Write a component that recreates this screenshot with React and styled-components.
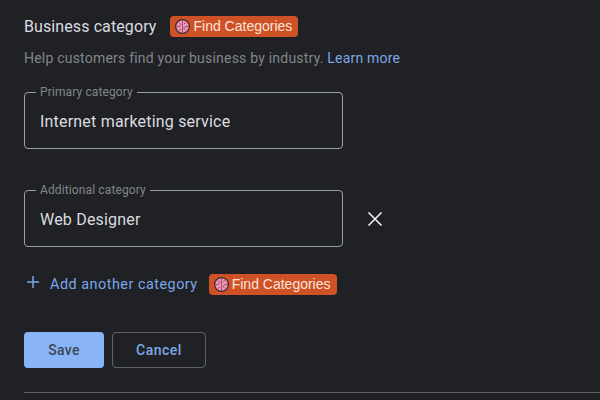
import React from 'react';
import styled, { createGlobalStyle } from 'styled-components';

const GlobalStyle = createGlobalStyle`
  html, body {
    margin: 0;
    height: 100%;
    overflow: hidden;
    background: #202124;
    font-family: Roboto, "Liberation Sans", sans-serif;
  }
`;

const Page = styled.div`
  width: 600px;
  height: 400px;
  box-sizing: border-box;
  padding: 16px 0 0 24px;
  overflow: hidden;
`;

const TitleRow = styled.div`
  display: flex;
  align-items: center;
  height: 21px;
  gap: 14px;
`;

const Title = styled.h2`
  margin: 0;
  font-size: 16px;
  font-weight: 400;
  letter-spacing: 0.1px;
  color: #dadce0;
`;

const Help = styled.p`
  margin: 11px 0 0;
  height: 20px;
  line-height: 20px;
  font-size: 14px;
  letter-spacing: 0.21px;
  color: #80868b;
`;

const Link = styled.a`
  color: #7ba7e8;
`;

const Badge = styled.span`
  display: inline-flex;
  align-items: center;
  gap: 3px;
  height: 21px;
  padding: 0 6px 1px 5px;
  box-sizing: border-box;
  border-radius: 4px;
  background: #cf5126;
  color: #fbe4da;
  font-family: "Liberation Sans", Arial, sans-serif;
  font-size: 14px;
  white-space: nowrap;
`;

const FieldRow = styled.div`
  display: flex;
  align-items: center;
  margin-top: ${props => props.$top}px;
`;

const Field = styled.div`
  position: relative;
  display: flex;
  align-items: center;
  box-sizing: border-box;
  width: 319px;
  height: 57px;
  padding: 1px 15px 0;
  border: 1px solid #9aa0a6;
  border-radius: 4px;
  font-size: 16px;
  letter-spacing: 0.2px;
  color: #dadce0;
`;

const Legend = styled.label`
  position: absolute;
  top: -7px;
  left: 11px;
  padding: 0 4px;
  background: #202124;
  font-size: 12px;
  line-height: 13px;
  letter-spacing: 0.12px;
  color: #80868b;
`;

const RemoveButton = styled.button`
  display: flex;
  margin-left: 24px;
  padding: 0;
  border: 0;
  background: none;
  color: #e8eaed;
`;

const AddRow = styled.div`
  display: flex;
  align-items: center;
  height: 21px;
  margin-top: 27px;
`;

const AddLink = styled.a`
  margin: 0 11px 0 9px;
  font-size: 14.4px;
  letter-spacing: 0.5px;
  color: #7ba7e8;
`;

const PlusIcon = styled.svg`
  margin: -6px 0 0 1px;
`;

const Actions = styled.div`
  display: flex;
  gap: 8px;
  margin-top: 37px;
`;

const SaveButton = styled.button`
  width: 80px;
  height: 36px;
  padding: 0;
  border: 0;
  border-radius: 4px;
  background: #8ab4f8;
  color: #3c4656;
  font: 500 14px Roboto, sans-serif;
  letter-spacing: 0.3px;
`;

const CancelButton = styled.button`
  width: 94px;
  height: 36px;
  padding: 0;
  border: 1px solid #5f6368;
  border-radius: 4px;
  background: none;
  color: #7ba7e8;
  font: 500 14px Roboto, sans-serif;
  letter-spacing: 0.5px;
`;

const Divider = styled.hr`
  margin: 24px 0 0;
  border: 0;
  border-top: 1px solid #5f6368;
`;

function BrainIcon() {
  return (
    <svg width="15" height="15" viewBox="0 0 15 15">
      <circle cx="7.5" cy="7.5" r="7.5" fill="#3a2a2e" />
      <circle cx="7.5" cy="7.5" r="6.2" fill="#f095b5" />
      <path
        d="M7.5 1.5v12M1.5 7.5h3l1.5-2M13.5 7.5h-3l-1.5 2M4 3.5l2 2M11 11.5l-2-2M11 3.5l-2 1.5M4 11.5l2-1.5"
        stroke="#8c3f58"
        strokeWidth="0.8"
        fill="none"
      />
    </svg>
  );
}

function FindCategories() {
  return (
    <Badge>
      <BrainIcon />
      Find Categories
    </Badge>
  );
}

export default function App() {
  return (
    <Page>
      <GlobalStyle />
      <TitleRow>
        <Title>Business category</Title>
        <FindCategories />
      </TitleRow>
      <Help>
        Help customers find your business by industry. <Link>Learn more</Link>
      </Help>
      <FieldRow $top={24}>
        <Field>
          <Legend>Primary category</Legend>
          Internet marketing service
        </Field>
      </FieldRow>
      <FieldRow $top={41}>
        <Field>
          <Legend>Additional category</Legend>
          Web Designer
        </Field>
        <RemoveButton aria-label="Remove">
          <svg width="16" height="16" viewBox="0 0 16 16">
            <path d="M1.5 1.5l13 13M14.5 1.5l-13 13" stroke="currentColor" strokeWidth="1.7" fill="none" />
          </svg>
        </RemoveButton>
      </FieldRow>
      <AddRow>
        <PlusIcon width="16" height="16" viewBox="0 0 16 16">
          <path d="M8 2v12M2 8h12" stroke="#7ba7e8" strokeWidth="1.5" fill="none" />
        </PlusIcon>
        <AddLink>Add another category</AddLink>
        <FindCategories />
      </AddRow>
      <Actions>
        <SaveButton>Save</SaveButton>
        <CancelButton>Cancel</CancelButton>
      </Actions>
      <Divider />
    </Page>
  );
}
